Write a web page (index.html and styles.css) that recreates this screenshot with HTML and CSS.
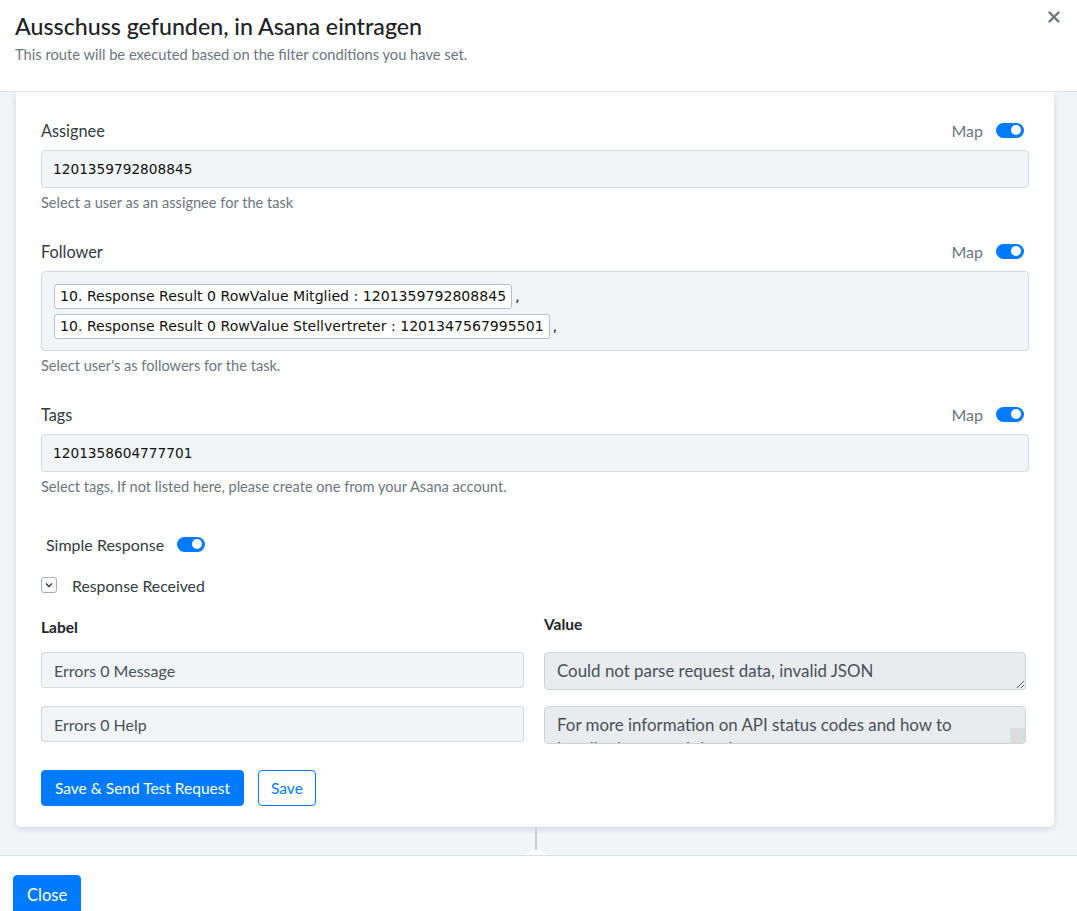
FILE: index.html
```html
<!DOCTYPE html>
<html lang="de">
<head>
    <meta charset="UTF-8">
    <title>Ausschuss gefunden, in Asana eintragen</title>
    <link rel="stylesheet" href="styles.css">
</head>
<body>
    <div class="modal">
        <!-- Kopfbereich -->
        <div class="modal-header">
            <h2 class="modal-title">Ausschuss gefunden, in Asana eintragen</h2>
            <p class="modal-subtitle">This route will be executed based on the filter conditions you have set.</p>
            <button class="close-x" aria-label="Close">
                <svg width="12" height="12" viewBox="0 0 12 12"><path d="M1.5 1.5 L10.5 10.5 M10.5 1.5 L1.5 10.5" stroke="#70757c" stroke-width="2.4" stroke-linecap="round"/></svg>
            </button>
        </div>

        <!-- Inhalt -->
        <div class="modal-body">
            <div class="card">
                <div class="field">
                    <div class="field-head">
                        <label>Assignee</label>
                        <span class="map">Map <span class="toggle"></span></span>
                    </div>
                    <div class="input">1201359792808845</div>
                    <p class="help">Select a user as an assignee for the task</p>
                </div>

                <div class="field">
                    <div class="field-head">
                        <label>Follower</label>
                        <span class="map">Map <span class="toggle"></span></span>
                    </div>
                    <div class="input chips">
                        <div class="chip-line"><span class="chip">10. Response Result 0 RowValue Mitglied : 1201359792808845</span>,</div>
                        <div class="chip-line"><span class="chip">10. Response Result 0 RowValue Stellvertreter : 1201347567995501</span>,</div>
                    </div>
                    <p class="help">Select user's as followers for the task.</p>
                </div>

                <div class="field">
                    <div class="field-head">
                        <label>Tags</label>
                        <span class="map">Map <span class="toggle"></span></span>
                    </div>
                    <div class="input">1201358604777701</div>
                    <p class="help">Select tags, If not listed here, please create one from your Asana account.</p>
                </div>

                <div class="simple-response">
                    Simple Response <span class="toggle"></span>
                </div>

                <div class="received">
                    <span class="chevron-box">
                        <svg width="8" height="6" viewBox="0 0 8 6"><path d="M1 1.5 L4 4.5 L7 1.5" fill="none" stroke="#333" stroke-width="1.4"/></svg>
                    </span>
                    Response Received
                </div>

                <div class="response-grid">
                    <div class="col-head">Label</div>
                    <div class="col-head value-head">Value</div>

                    <div class="label-box">Errors 0 Message</div>
                    <textarea class="value-box" readonly>Could not parse request data, invalid JSON</textarea>

                    <div class="label-box">Errors 0 Help</div>
                    <textarea class="value-box scrolling" readonly>For more information on API status codes and how to handle them, read the docs on errors: https://developers.asana.com/docs/errors</textarea>
                </div>

                <div class="actions">
                    <button class="btn btn-primary">Save &amp; Send Test Request</button>
                    <button class="btn btn-outline">Save</button>
                </div>
            </div>

            <!-- Verbindungslinie zum nächsten Schritt -->
            <div class="connector"></div>
            <div class="connector-dot"></div>
        </div>

        <!-- Fußbereich -->
        <div class="modal-footer">
            <button class="btn btn-primary btn-close">Close</button>
        </div>
    </div>
</body>
</html>
```

FILE: styles.css
```css
body {
    margin: 0;
    font-family: "Lato", "Open Sans", sans-serif;
    color: #212529;
    background: #ffffff;
    overflow: hidden;
}
.modal {
    width: 1077px;
    height: 911px;
    display: flex;
    flex-direction: column;
    overflow: hidden;
}
.modal-header, .modal-body, .modal-footer {
    flex-shrink: 0;
}
.modal-header {
    position: relative;
    height: 92px;
    box-sizing: border-box;
    padding: 13px 16px 0 15px;
    border-bottom: 1px solid #dce3ef;
}
.modal-title {
    margin: 0;
    font-size: 23.2px;
    line-height: 26px;
    font-weight: 500;
    color: #1e2226;
}
.modal-subtitle {
    margin: 6px 0 0;
    font-size: 14.7px;
    line-height: 18px;
    color: #6c757d;
}
.close-x {
    position: absolute;
    top: 11px;
    right: 16px;
    border: none;
    background: none;
    padding: 0;
    width: 14px;
    height: 14px;
    cursor: pointer;
}
.modal-body {
    height: 763px;
    background: #f2f5f8;
    overflow: hidden;
    display: flex;
    flex-direction: column;
    align-items: center;
}
.card {
    align-self: stretch;
    margin: 0 23px 0 16px;
    background: #ffffff;
    border-radius: 0 0 5px 5px;
    box-shadow: 0 2px 6px rgba(40, 60, 110, 0.18);
    padding: 28px 25px 21px;
}
.field {
    margin-bottom: 29px;
}
.field-head {
    display: flex;
    justify-content: space-between;
    align-items: center;
    height: 20px;
    margin-bottom: 10px;
}
.field-head label {
    font-size: 16.3px;
    color: #333a40;
}
.map {
    display: flex;
    align-items: center;
    gap: 13px;
    font-size: 16px;
    color: #6c757d;
    margin-right: 5px;
}
.toggle {
    display: inline-block;
    position: relative;
    width: 28px;
    height: 15px;
    border-radius: 8px;
    background: #007bff;
}
.toggle::after {
    content: "";
    position: absolute;
    right: 3px;
    top: 2.5px;
    width: 10px;
    height: 10px;
    border-radius: 50%;
    background: #ffffff;
}
.input {
    box-sizing: border-box;
    height: 38px;
    padding: 0 11px;
    display: flex;
    align-items: center;
    background: #f2f5f8;
    border: 1px solid #d3d9e0;
    border-radius: 4px;
    font-family: "DejaVu Sans", Verdana, sans-serif;
    font-size: 13.7px;
    color: #111;
}
.input.chips {
    height: 80px;
    flex-direction: column;
    align-items: flex-start;
    justify-content: center;
    gap: 5px;
    padding: 0 12px;
}
.chip-line {
    display: flex;
    align-items: center;
    gap: 3px;
}
.chip {
    display: inline-block;
    height: 25px;
    line-height: 23px;
    box-sizing: border-box;
    padding: 0 5px;
    background: #ffffff;
    border: 1px solid #b9bfc6;
    border-radius: 3px;
    font-size: 14.1px;
}
.help {
    margin: 6px 0 0;
    font-size: 14.6px;
    line-height: 18px;
    color: #6c757d;
}
.simple-response {
    display: flex;
    align-items: center;
    gap: 13px;
    height: 20px;
    margin: 38px 0 0 5px;
    font-size: 16px;
    color: #333a40;
}
.received {
    display: flex;
    align-items: center;
    gap: 15px;
    height: 20px;
    margin-top: 21px;
    font-size: 15.8px;
    color: #333a40;
}
.chevron-box {
    width: 16px;
    height: 16px;
    box-sizing: border-box;
    border: 1px solid #a8aeb5;
    border-radius: 3px;
    display: flex;
    align-items: center;
    justify-content: center;
}
.response-grid {
    display: grid;
    grid-template-columns: 483px 482px;
    column-gap: 20px;
    row-gap: 16px;
    margin-top: 22px;
    align-items: start;
}
.col-head {
    font-size: 15.5px;
    font-weight: 700;
    line-height: 20px;
    margin-bottom: -1px;
    color: #212529;
}
.value-head {
    margin-top: -3px;
}
.label-box {
    box-sizing: border-box;
    height: 36px;
    padding: 0 12px;
    display: flex;
    align-items: center;
    background: #f2f5f8;
    border: 1px solid #d3d9e0;
    border-radius: 3px;
    font-size: 16px;
    color: #495057;
}
.value-box {
    box-sizing: border-box;
    height: 38px;
    width: 100%;
    margin: 0;
    padding: 6px 12px;
    background: #e9ecef;
    border: 1px solid #ced4da;
    border-radius: 4px;
    font-family: "Lato", "Open Sans", sans-serif;
    font-size: 16.9px;
    line-height: 24px;
    color: #495057;
    resize: vertical;
    display: block;
}
.value-box.scrolling {
    overflow-y: scroll;
    padding-right: 30px;
}
.value-box.scrolling::-webkit-scrollbar {
    width: 15px;
}
.value-box.scrolling::-webkit-scrollbar-track {
    background: #f1f1f1;
}
.value-box.scrolling::-webkit-scrollbar-thumb {
    background: transparent;
}
.value-box.scrolling::-webkit-scrollbar-button:single-button {
    display: block;
    height: 10px;
    background-color: #f1f1f1;
    background-repeat: no-repeat;
    background-size: 4px 4px;
}
.value-box.scrolling::-webkit-scrollbar-button:single-button:vertical:decrement {
    background-image:
        linear-gradient(to bottom right, transparent 50%, #a3a3a3 50%),
        linear-gradient(to bottom left, transparent 50%, #a3a3a3 50%);
    background-position: 3px 4px, 7px 4px;
    border-bottom: 1px solid #c8c8c8;
}
.value-box.scrolling::-webkit-scrollbar-button:single-button:vertical:increment {
    background-image:
        linear-gradient(to top right, transparent 50%, #505050 50%),
        linear-gradient(to top left, transparent 50%, #505050 50%);
    background-position: 3px 2px, 7px 2px;
}
.value-box.scrolling::-webkit-resizer {
    background: #dcdcdc;
}
.actions {
    display: flex;
    gap: 14px;
    margin-top: 26px;
}
.btn {
    font-family: "Lato", "Open Sans", sans-serif;
    height: 36px;
    box-sizing: border-box;
    border-radius: 4px;
    font-size: 15.5px;
    cursor: pointer;
}
.btn-primary {
    background: #007bff;
    border: 1px solid #007bff;
    color: #ffffff;
    padding: 0 13px;
}
.btn-outline {
    background: #ffffff;
    border: 1px solid #007bff;
    color: #007bff;
    padding: 0 12px;
}
.connector {
    width: 2px;
    height: 23px;
    flex-shrink: 0;
    background: #c9cdd3;
    margin-left: -5px;
}
.connector-dot {
    width: 24px;
    height: 24px;
    border-radius: 50%;
    background: #ffffff;
    margin-left: -5px;
    flex-shrink: 0;
}
.modal-footer {
    border-top: 1px solid #d6dff0;
    padding: 19px 13px;
}
.btn-close {
    height: 40px;
    font-size: 16.5px;
    padding: 0 13px;
}
```
